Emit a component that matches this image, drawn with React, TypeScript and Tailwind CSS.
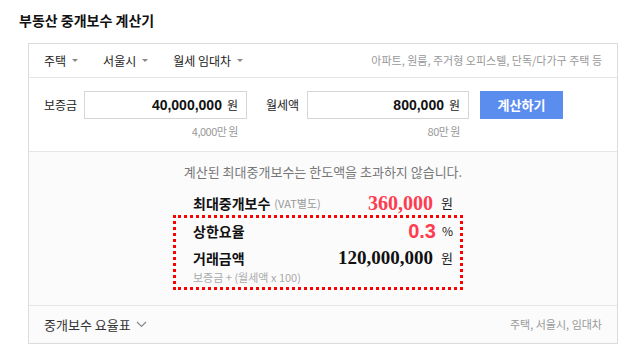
const kr = { fontFamily: '"Noto Sans CJK KR", "Noto Sans", sans-serif' };
const num = { fontFamily: '"Liberation Sans", Arial, sans-serif' };
const serif = { fontFamily: '"Liberation Serif", serif' };

function Caret() {
  return <span className="ml-[6px] inline-block h-0 w-0 border-x-[3px] border-t-[3px] border-x-transparent border-t-[#888]" />;
}

export default function App() {
  return (
    <div className="h-[350px] w-[635px] bg-white text-[#222]" style={kr}>
      <div className="pl-[19px] pt-[11px] text-[14px] font-bold leading-[18px] text-[#111]">부동산 중개보수 계산기</div>
      <div className="ml-[28px] mt-[14px] w-[590px] border border-[#dcdce0]">
        {/* tabs */}
        <div className="flex h-[34px] items-center border-b border-[#e6e6e8] px-[15px] text-[12px]">
          <span className="flex items-center">주택<Caret /></span>
          <span className="ml-[25px] flex items-center">서울시<Caret /></span>
          <span className="ml-[25px] flex items-center">월세 임대차<Caret /></span>
          <span className="ml-auto text-[11px] text-[#999]">아파트, 원룸, 주거형 오피스텔, 단독/다가구 주택 등</span>
        </div>
        {/* inputs */}
        <div className="h-[74px] border-b border-[#e6e6e8] pl-[15px]">
          <div className="flex items-start pt-[13px]">
            <div className="flex flex-col">
              <div className="flex items-center">
                <span className="w-[40px] text-[12px]">보증금</span>
                <div className="flex h-[28px] w-[163px] items-center justify-end border border-[#d6d6d6] bg-white pr-[8px]">
                  <span className="text-[14px] font-bold text-[#111]" style={num}>40,000,000</span>
                  <span className="ml-[5px] text-[12px]">원</span>
                </div>
              </div>
              <div className="mt-[4px] pr-[9px] text-right text-[11px] leading-[16px] tracking-[-0.5px] text-[#999]">4,000만 원</div>
            </div>
            <div className="ml-[19px] flex flex-col">
              <div className="flex items-center">
                <span className="w-[41px] text-[12px]">월세액</span>
                <div className="flex h-[28px] w-[162px] items-center justify-end border border-[#d6d6d6] bg-white pr-[8px]">
                  <span className="text-[14px] font-bold text-[#111]" style={num}>800,000</span>
                  <span className="ml-[5px] text-[12px]">원</span>
                </div>
              </div>
              <div className="mt-[4px] pr-[9px] text-right text-[11px] leading-[16px] tracking-[-0.5px] text-[#999]">80만 원</div>
            </div>
            <button className="ml-[11px] flex h-[28px] w-[83px] items-center justify-center bg-[#5b8def] text-[13px] font-bold text-white">계산하기</button>
          </div>
        </div>
        {/* result */}
        <div className="bg-[#fbfbfc]">
          <div className="flex h-[153px] flex-col items-center pt-[11px]">
            <div className="text-[13px] leading-[18px] text-[#777]">계산된 최대중개보수는 한도액을 초과하지 않습니다.</div>
            <div className="mr-[10px] mt-[10px] w-[290px]">
              <div className="flex h-[24px] items-center pl-[20px] pr-[10px]">
                <span className="text-[14px] font-bold text-[#111]">최대중개보수</span>
                <span className="ml-[4px] text-[11px] text-[#999]">(VAT별도)</span>
                <span className="ml-auto text-[20px] font-bold leading-[24px] text-[#ff3b4f]" style={serif}>360,000</span>
                <span className="ml-[8px] text-[13px]">원</span>
              </div>
              <div className="border-[3px] border-dotted border-[#ff0000] pb-[3px] pl-[17px] pr-[7px] pt-[3px]">
                <div className="flex h-[20px] items-center">
                  <span className="text-[14px] font-bold text-[#111]">상한요율</span>
                  <span className="ml-auto text-[20px] font-bold leading-[20px] text-[#ff3b4f]" style={num}>0.3</span>
                  <span className="ml-[6px] text-[12px]">%</span>
                </div>
                <div className="mt-[7px] flex h-[20px] items-center">
                  <span className="text-[14px] font-bold text-[#111]">거래금액</span>
                  <span className="ml-auto text-[19px] font-bold leading-[20px] text-[#111]" style={serif}>120,000,000</span>
                  <span className="ml-[8px] text-[13px]">원</span>
                </div>
                <div className="mt-[2px] text-[11px] leading-[14px] text-[#aaa]">보증금 + (월세액 x 100)</div>
              </div>
            </div>
          </div>
          <div className="flex h-[38px] items-center border-t border-[#e6e6e8] px-[15px]">
            <span className="flex items-center text-[13px] text-[#333]">
              중개보수 요율표
              <svg width="11" height="7" viewBox="0 0 11 7" className="ml-[5px]"><path d="M1 1l4.5 4.5L10 1" fill="none" stroke="#888" strokeWidth="1.2" /></svg>
            </span>
            <span className="ml-auto text-[11px] text-[#999]">주택, 서울시, 임대차</span>
          </div>
        </div>
      </div>
    </div>
  );
}
